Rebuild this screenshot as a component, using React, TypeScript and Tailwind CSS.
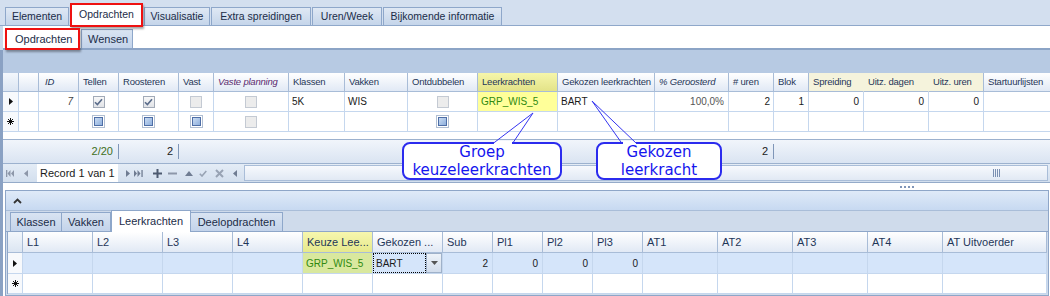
import React from "react"

type Cell = { c?: React.ReactNode; cls?: string }
type Col = { w: string; label: string; t?: string; bg?: string }

const NARROW = "text-[9.5px] tracking-[-0.2px]"
const HEAD_BG = "bg-linear-to-b from-white to-[#e1e9f5]"

const topCols: Col[] = [
  { w: "w-[16px]", label: "", bg: "bg-linear-to-b from-[#f3f7fc] to-[#dbe5f2]" },
  { w: "w-[20px]", label: "" },
  { w: "w-[40px]", label: "ID", t: "italic pl-[6px]" },
  { w: "w-[40px]", label: "Tellen" },
  { w: "w-[60px]", label: "Roosteren" },
  { w: "w-[35px]", label: "Vast" },
  { w: "w-[75px]", label: "Vaste planning", t: "italic text-[#5a2a6e]" },
  { w: "w-[56px]", label: "Klassen" },
  { w: "w-[63px]", label: "Vakken" },
  { w: "w-[70px]", label: "Ontdubbelen" },
  { w: "w-[80px]", label: "Leerkrachten", bg: "bg-linear-to-b from-[#f6f6aa] to-[#e3e388]" },
  { w: "w-[97px]", label: "Gekozen leerkrachten" },
  { w: "w-[74px]", label: "% Geroosterd", t: "italic" },
  { w: "w-[45px]", label: "# uren" },
  { w: "w-[35px]", label: "Blok" },
  { w: "w-[55px]", label: "Spreiding", bg: "bg-[#f5f3dc] border-r-[#f5f3dc]" },
  { w: "w-[65px]", label: "Uitz. dagen", bg: "bg-[#f5f3dc] border-r-[#f5f3dc]" },
  { w: "w-[55px]", label: "Uitz. uren", bg: "bg-[#f5f3dc]" },
  { w: "w-[86px]", label: "Startuurlijsten" },
]

const botCols: Col[] = [
  { w: "w-[15px]", label: "", bg: "bg-linear-to-b from-[#f3f7fc] to-[#dbe5f2]" },
  { w: "w-[70px]", label: "L1" },
  { w: "w-[70px]", label: "L2" },
  { w: "w-[70px]", label: "L3" },
  { w: "w-[70px]", label: "L4" },
  { w: "w-[70px]", label: "Keuze Lee...", bg: "bg-linear-to-b from-[#f7f7ae] to-[#e6e98c]" },
  { w: "w-[70px]", label: "Gekozen ..." },
  { w: "w-[50px]", label: "Sub" },
  { w: "w-[50px]", label: "Pl1" },
  { w: "w-[50px]", label: "Pl2" },
  { w: "w-[50px]", label: "Pl3" },
  { w: "w-[75px]", label: "AT1" },
  { w: "w-[75px]", label: "AT2" },
  { w: "w-[75px]", label: "AT3" },
  { w: "w-[75px]", label: "AT4" },
  { w: "w-[104px]", label: "AT Uitvoerder" },
]

const Check = () => (
  <span className="inline-flex w-[12px] h-[12px] items-center justify-center border border-[#a2aab7] bg-linear-to-b from-[#f8f8f8] to-[#e1e3e7]">
    <svg width="9" height="8" viewBox="0 0 9 8">
      <path d="M1 4.2 L3.4 6.6 L8 1.2" fill="none" stroke="#5a6c8a" strokeWidth="1.6" />
    </svg>
  </span>
)

const GrayBox = () => <span className="inline-block w-[12px] h-[12px] border border-[#c4cad3] bg-[#ececec]" />

const BlueBox = () => (
  <span className="inline-flex w-[13px] h-[13px] items-center justify-center border border-[#b1bfd3] bg-white">
    <span className="w-[9px] h-[9px] border border-[#4e6ea6] bg-linear-to-br from-[#cadcf3] to-[#8eafdc]" />
  </span>
)

const Tri = () => (
  <svg width="4" height="7" viewBox="0 0 4 7">
    <path d="M0 0 L4 3.5 L0 7Z" fill="#111" />
  </svg>
)

const Star = () => (
  <svg width="7" height="7" viewBox="0 0 7 7" stroke="#111" strokeWidth="1">
    <path d="M3.5 0 V7 M0 3.5 H7 M1 1 L6 6 M6 1 L1 6" />
  </svg>
)

const C = ({ children }: { children: React.ReactNode }) => (
  <div className="flex-1 flex items-center justify-center">{children}</div>
)

const row1: Cell[] = [
  { c: <Tri />, cls: "justify-center bg-[#f7f9fc]" },
  {},
  { c: <span className="italic text-[#444]">7</span>, cls: "justify-end pr-[5px]" },
  { c: <C><Check /></C> },
  { c: <C><Check /></C> },
  { c: <C><GrayBox /></C> },
  { c: <C><GrayBox /></C> },
  { c: "5K", cls: "pl-[3px]" },
  { c: "WIS", cls: "pl-[3px]" },
  { c: <C><GrayBox /></C> },
  { c: <span className="text-[#2f8a10]">GRP_WIS_5</span>, cls: "pl-[3px] bg-[#ffff99]" },
  { c: "BART", cls: "pl-[3px]" },
  { c: <span className="text-[#555]">100,0%</span>, cls: "justify-end pr-[4px]" },
  { c: "2", cls: "justify-end pr-[3px]" },
  { c: "1", cls: "justify-end pr-[4px]" },
  { c: "0", cls: "justify-end pr-[4px]" },
  { c: "0", cls: "justify-end pr-[4px]" },
  { c: "0", cls: "justify-end pr-[4px]" },
  {},
]

const row2: Cell[] = [
  { c: <Star />, cls: "justify-center bg-[#f7f9fc]" },
  {},
  {},
  { c: <C><BlueBox /></C> },
  { c: <C><BlueBox /></C> },
  { c: <C><BlueBox /></C> },
  { c: <C><GrayBox /></C> },
  {},
  {},
  { c: <C><BlueBox /></C> },
  {},
  {},
  {},
  {},
  {},
  {},
  {},
  {},
  {},
]

const botRow1: Cell[] = [
  { c: <Tri />, cls: "justify-center bg-[#f7f9fc]" },
  { cls: "bg-[#d5e5fa]" },
  { cls: "bg-[#d5e5fa]" },
  { cls: "bg-[#d5e5fa]" },
  { cls: "bg-[#d5e5fa]" },
  { c: <span className="text-[#2f8a10]">GRP_WIS_5</span>, cls: "pl-[3px] bg-[#d9e89e]" },
  {
    c: (
      <div className="flex w-full h-full">
        <div className="flex-1 flex items-center pl-[2px] border border-dotted border-black">BART</div>
        <div className="w-[16px] flex items-center justify-center border border-[#9fb1c9] bg-linear-to-b from-[#eef3f9] to-[#d2ddec]">
          <svg width="7" height="4" viewBox="0 0 7 4">
            <path d="M0 0 H7 L3.5 4Z" fill="#555" />
          </svg>
        </div>
      </div>
    ),
    cls: "bg-[#d5e5fa]",
  },
  { c: "2", cls: "justify-end pr-[4px] bg-[#d5e5fa]" },
  { c: "0", cls: "justify-end pr-[4px] bg-[#d5e5fa]" },
  { c: "0", cls: "justify-end pr-[4px] bg-[#d5e5fa]" },
  { c: "0", cls: "justify-end pr-[4px] bg-[#d5e5fa]" },
  { cls: "bg-[#d5e5fa]" },
  { cls: "bg-[#d5e5fa]" },
  { cls: "bg-[#d5e5fa]" },
  { cls: "bg-[#d5e5fa]" },
  { cls: "bg-[#d5e5fa]" },
]

const botRow2: Cell[] = botCols.map((_, i) => (i === 0 ? { c: <Star />, cls: "justify-center bg-[#f7f9fc]" } : {}))

const HeadRow = ({ cols, h, font }: { cols: Col[]; h: string; font: string }) => (
  <div className={`flex shrink-0 ${h}`}>
    {cols.map((col, i) => (
      <div
        key={i}
        className={`shrink-0 flex items-center px-[4px] border-r border-b border-[#a8bcd7] text-[#1f3658] whitespace-nowrap overflow-hidden ${font} ${col.w} ${col.bg ?? HEAD_BG} ${col.t ?? ""}`}
      >
        {col.label}
      </div>
    ))}
  </div>
)

const BodyRow = ({ cols, cells, h }: { cols: Col[]; cells: Cell[]; h: string }) => (
  <div className={`flex shrink-0 ${h}`}>
    {cols.map((col, i) => (
      <div
        key={i}
        className={`shrink-0 flex items-center border-r border-b border-[#c5d7ee] whitespace-nowrap overflow-hidden ${col.w} ${cells[i]?.cls ?? ""}`}
      >
        {cells[i]?.c}
      </div>
    ))}
  </div>
)

const Tab = ({ label, w, active }: { label: string; w: string; active?: boolean }) =>
  active ? (
    <div className={`relative z-10 h-[24px] -mb-[2px] flex items-center justify-center bg-white border-2 border-[#ee1111] shadow-[1px_2px_2px_rgba(0,0,0,0.35)] text-[#1b2c48] ${w}`}>
      {label}
    </div>
  ) : (
    <div className={`h-[18px] flex items-center justify-center border border-b-0 border-[#8ea7ca] bg-linear-to-b from-[#dfe8f4] to-[#c5d5ea] text-[#1b2c48] ${w}`}>
      {label}
    </div>
  )

const NavIcon = ({ children, cls }: { children: React.ReactNode; cls: string }) => (
  <div className={`flex items-center shrink-0 ${cls}`}>{children}</div>
)

export default function App() {
  return (
    <div className="relative w-[1050px] h-[296px] overflow-hidden bg-white font-['Liberation_Sans',Arial,sans-serif] text-[11px] text-[#1a1a1a]">
      {/* main tabs */}
      <div className="h-[26px] flex items-end gap-px pl-[5px] bg-[#d3dfef] border-b border-[#8fa8ca] text-[10.5px]">
        <Tab label="Elementen" w="w-[64px]" />
        <Tab label="Opdrachten" w="w-[73px]" active />
        <Tab label="Visualisatie" w="w-[66px]" />
        <Tab label="Extra spreidingen" w="w-[100px]" />
        <Tab label="Uren/Week" w="w-[70px]" />
        <Tab label="Bijkomende informatie" w="w-[119px]" />
      </div>

      <div className="flex h-[270px]">
        <div className="w-[3px] flex flex-col shrink-0">
          <div className="h-[24px] bg-[#cad8ea]" />
          <div className="flex-1 bg-[#8aa1c3]" />
        </div>

        <div className="flex-1 flex flex-col min-w-0">
          {/* sub tabs */}
          <div className="h-[24px] shrink-0 flex items-end pl-[2px] bg-white border-b-2 border-[#8ca4c6]">
            <div className="relative z-10 w-[75px] h-[22px] -mb-[2px] flex items-center pl-[8px] bg-white border-2 border-[#ee1111] shadow-[1px_2px_2px_rgba(0,0,0,0.35)] text-[#1b2c48]">
              Opdrachten
            </div>
            <div className="ml-px w-[52px] h-[19px] flex items-center pl-[6px] border border-b-0 border-[#8ea7ca] bg-linear-to-b from-[#d9e4f2] to-[#c3d3ea] text-[#1b2c48]">
              Wensen
            </div>
          </div>

          {/* group band */}
          <div className="h-[23px] shrink-0 bg-[#b7cae3]" />

          {/* top grid */}
          <HeadRow cols={topCols} h="h-[19px]" font={NARROW} />
          <div className="text-[10px]">
            <BodyRow cols={topCols} cells={row1} h="h-[20px]" />
            <BodyRow cols={topCols} cells={row2} h="h-[20px]" />
          </div>
          <div className="h-[7px] shrink-0 bg-white" />

          {/* footer summary */}
          <div className="h-[25px] shrink-0 flex items-center border-y border-[#9cb1ce] bg-linear-to-b from-[#f1f5fb] to-[#dae4f2] text-[11px]">
            <div className="w-[76px] shrink-0" />
            <div className="w-[40px] shrink-0 h-[15px] flex items-center justify-end pr-[5px] border-r border-[#7f96b8] text-[#3f6f22]">2/20</div>
            <div className="w-[60px] shrink-0 h-[15px] flex items-center justify-end pr-[5px] border-r border-[#7f96b8]">2</div>
            <div className="w-[550px] shrink-0" />
            <div className="w-[45px] shrink-0 h-[15px] flex items-center justify-end pr-[5px] border-r border-[#7f96b8]">2</div>
          </div>

          {/* navigator */}
          <div className="h-[18px] shrink-0 flex items-stretch bg-linear-to-b from-[#e4ecf6] to-[#d3dfee]">
            <NavIcon cls="ml-[3px]">
              <svg width="8" height="7" viewBox="0 0 8 7" fill="#8d97a9">
                <rect x="0" y="0" width="1.3" height="7" />
                <path d="M4.5 0 L1.5 3.5 L4.5 7Z M8 0 L5 3.5 L8 7Z" />
              </svg>
            </NavIcon>
            <NavIcon cls="ml-[10px]">
              <svg width="4" height="7" viewBox="0 0 4 7" fill="#8d97a9">
                <path d="M4 0 L0 3.5 L4 7Z" />
              </svg>
            </NavIcon>
            <div className="ml-[9px] w-[81px] shrink-0 flex items-center pl-[3px] bg-white text-[#1a1a1a]">Record 1 van 1</div>
            <NavIcon cls="ml-[8px]">
              <svg width="4" height="7" viewBox="0 0 4 7" fill="#6f7c92">
                <path d="M0 0 L4 3.5 L0 7Z" />
              </svg>
            </NavIcon>
            <NavIcon cls="ml-[4px]">
              <svg width="9" height="7" viewBox="0 0 9 7" fill="#6f7c92">
                <path d="M0 0 L3 3.5 L0 7Z M3.5 0 L6.5 3.5 L3.5 7Z" />
                <rect x="7.4" y="0" width="1.3" height="7" />
              </svg>
            </NavIcon>
            <NavIcon cls="ml-[10px]">
              <svg width="9" height="9" viewBox="0 0 9 9" fill="#4d5a70">
                <rect x="3.5" y="0" width="2" height="9" />
                <rect x="0" y="3.5" width="9" height="2" />
              </svg>
            </NavIcon>
            <NavIcon cls="ml-[6px]">
              <svg width="9" height="9" viewBox="0 0 9 9" fill="#8d97a9">
                <rect x="0" y="3.5" width="9" height="2" />
              </svg>
            </NavIcon>
            <NavIcon cls="ml-[8px]">
              <svg width="8" height="5" viewBox="0 0 8 5" fill="#6f7c92">
                <path d="M0 5 L4 0 L8 5Z" />
              </svg>
            </NavIcon>
            <NavIcon cls="ml-[6px]">
              <svg width="8" height="7" viewBox="0 0 8 7">
                <path d="M0.8 3.8 L3 6 L7.3 1" fill="none" stroke="#98a3b4" strokeWidth="1.6" />
              </svg>
            </NavIcon>
            <NavIcon cls="ml-[8px]">
              <svg width="9" height="9" viewBox="0 0 9 9">
                <path d="M1 1 L8 8 M8 1 L1 8" stroke="#98a3b4" strokeWidth="2" />
              </svg>
            </NavIcon>
            <NavIcon cls="ml-[9px]">
              <svg width="4" height="7" viewBox="0 0 4 7" fill="#6f7c92">
                <path d="M4 0 L0 3.5 L4 7Z" />
              </svg>
            </NavIcon>
            <div className="ml-[7px] mr-[2px] flex-1 flex items-center justify-end pr-[47px] my-[1px] border border-[#a9bdd8] bg-linear-to-b from-[#f7f9fd] to-[#e1e9f4]">
              <div className="flex gap-[1px]">
                <span className="w-px h-[8px] bg-[#7b90b2]" />
                <span className="w-px h-[8px] bg-[#7b90b2]" />
                <span className="w-px h-[8px] bg-[#7b90b2]" />
                <span className="w-px h-[8px] bg-[#7b90b2]" />
              </div>
            </div>
          </div>

          {/* splitter */}
          <div className="h-[8px] shrink-0 flex items-center justify-end pr-[136px] bg-white border-t border-[#95abc9]">
            <div className="flex gap-[2px]">
              <span className="w-[2px] h-[2px] bg-[#7f95b8]" />
              <span className="w-[2px] h-[2px] bg-[#7f95b8]" />
              <span className="w-[2px] h-[2px] bg-[#7f95b8]" />
              <span className="w-[2px] h-[2px] bg-[#7f95b8]" />
            </div>
          </div>

          {/* detail panel */}
          <div className="h-[106px] shrink-0 ml-[2px] mr-[1px] flex flex-col border border-[#8ea6c8] bg-[#cfdbeb]">
            <div className="h-[20px] shrink-0 flex items-center pl-[7px] bg-linear-to-b from-[#dfeaf8] to-[#c7d9f1] border-b border-[#a9bdd8]">
              <svg width="9" height="6" viewBox="0 0 9 6">
                <path d="M1 5 L4.5 1.5 L8 5" fill="none" stroke="#333" strokeWidth="1.8" />
              </svg>
            </div>
            <div className="h-[21px] shrink-0 flex items-end pl-[4px] border-b border-[#8ea6c8]">
              <div className="w-[52px] h-[19px] flex items-center justify-center border border-b-0 border-[#8ea7ca] bg-linear-to-b from-[#d9e4f2] to-[#c3d3ea] text-[#1b2c48]">Klassen</div>
              <div className="w-[49px] h-[19px] flex items-center justify-center border border-b-0 border-l-0 border-[#8ea7ca] bg-linear-to-b from-[#d9e4f2] to-[#c3d3ea] text-[#1b2c48]">Vakken</div>
              <div className="w-[80px] h-[22px] -mb-px relative flex items-center justify-center border border-b-0 border-[#8ea7ca] bg-white text-[#1b2c48]">Leerkrachten</div>
              <div className="w-[92px] h-[19px] flex items-center justify-center border border-b-0 border-l-0 border-[#8ea7ca] bg-linear-to-b from-[#d9e4f2] to-[#c3d3ea] text-[#1b2c48]">Deelopdrachten</div>
            </div>
            <div className="ml-[1px] flex flex-col bg-white w-[1040px] border-l border-[#8ea6c8]">
              <HeadRow cols={botCols} h="h-[21px]" font="" />
              <div className="text-[10px]">
                <BodyRow cols={botCols} cells={botRow1} h="h-[21px]" />
                <BodyRow cols={botCols} cells={botRow2} h="h-[20px]" />
              </div>
            </div>
          </div>
        </div>
      </div>

      {/* annotation callouts */}
      <div className="absolute z-10 left-[402px] top-[142px] w-[160px] h-[38px] flex flex-col items-center justify-center rounded-[8px] border-2 border-[#2b2bee] bg-white font-['DejaVu_Sans',sans-serif] text-[15px] leading-[18px] text-[#1515ee]">
        <span>Groep</span>
        <span>keuzeleerkrachten</span>
      </div>
      <div className="absolute z-10 left-[596px] top-[142px] w-[126px] h-[38px] flex flex-col items-center justify-center rounded-[8px] border-2 border-[#2b2bee] bg-white font-['DejaVu_Sans',sans-serif] text-[15px] leading-[18px] text-[#1515ee]">
        <span>Gekozen</span>
        <span>leerkracht</span>
      </div>
      <svg className="absolute z-20 left-0 top-0 pointer-events-none" width="1050" height="296">
        <rect x="494" y="141" width="18" height="4" fill="white" />
        <rect x="623" y="141" width="13" height="4" fill="white" />
        <path d="M533 113 L493 143.5 M533 113 L512.5 143.5" stroke="#3535f0" strokeWidth="1" fill="none" />
        <path d="M592 101 L622 143.5 M592 101 L636.5 143.5" stroke="#3535f0" strokeWidth="1" fill="none" />
      </svg>
    </div>
  )
}
